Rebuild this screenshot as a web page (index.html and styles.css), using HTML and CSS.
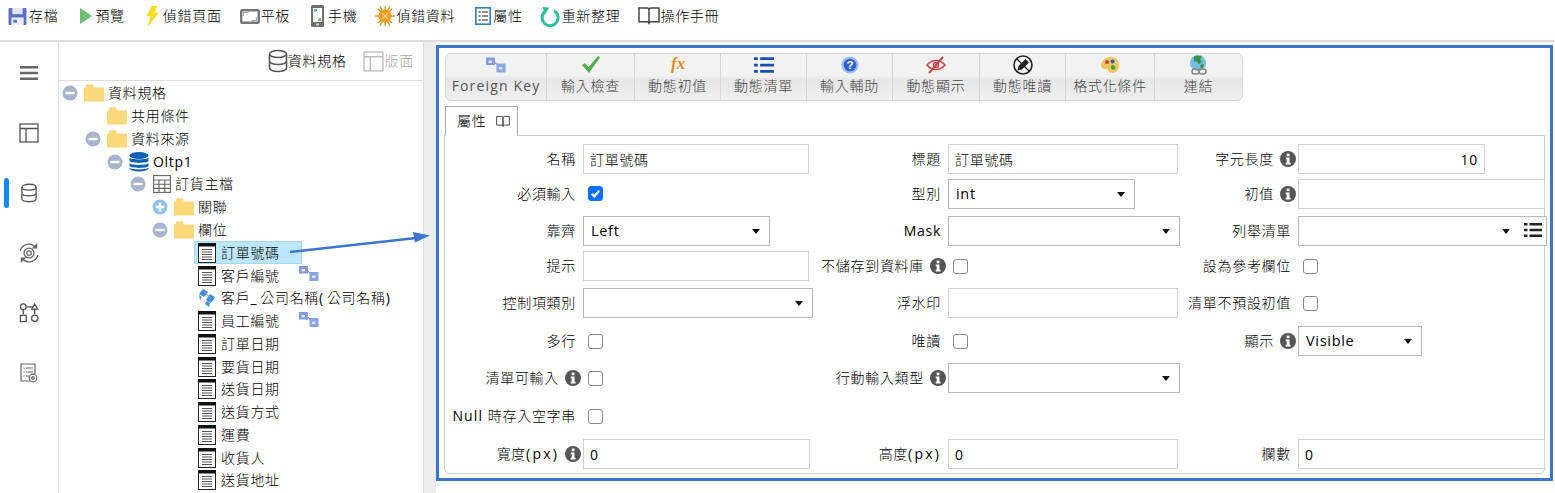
FILE: index.html
```html
<!DOCTYPE html>
<html lang="zh-Hant">
<head>
<meta charset="utf-8">
<title>資料規格</title>
<link rel="stylesheet" href="styles.css">
</head>
<body>
<svg class="defs" width="0" height="0" aria-hidden="true">
  <symbol id="i-db" viewBox="0 0 20 24"><g fill="none" stroke="currentColor" stroke-width="1.6"><ellipse cx="10" cy="5" rx="8.5" ry="3.5"/><path d="M1.5 5v14c0 2 3.8 3.5 8.5 3.500s8.500-1.500 8.500-3.500V5M1.500 12c0 2 3.800 3.500 8.500 3.500s8.500-1.500 8.500-3.500"/></g></symbol>
  <symbol id="i-layout" viewBox="0 0 20 20"><g fill="none" stroke="currentColor" stroke-width="1.300"><rect x="1" y="1" width="18" height="18"/><path d="M1 5.500h18M7 5.500V19"/></g></symbol>
  <symbol id="i-folder" viewBox="0 0 20 18"><path fill="#fbd87a" d="M0 3.500h2V1.500C2 .8 2.700.3 3.400.3h4.500c.8 0 1.300.5 1.500 1.200l.3 2H20V17.500H0z"/></symbol>
  <symbol id="i-minus" viewBox="0 0 16 16"><circle cx="8" cy="8" r="7.500" fill="#a7b4cb"/><rect x="3.500" y="6.800" width="9" height="2.400" fill="#fff"/></symbol>
  <symbol id="i-plus" viewBox="0 0 16 16"><circle cx="8" cy="8" r="7.500" fill="#8fc1fa"/><path fill="#fff" d="M3.500 6.800h3.300V3.500h2.400v3.300h3.300v2.400H9.200v3.300H6.800V9.200H3.500z"/></symbol>
  <symbol id="i-field" viewBox="0 0 18 20"><rect x=".5" y=".5" width="17" height="19" fill="#fff" stroke="#222"/><rect x="0" y="0" width="18" height="3.500" fill="#111"/><path stroke="#555" stroke-width="1.200" d="M4 6.500h10M4 9h10M4 11.500h10M4 14h10M4 16.500h10"/></symbol>
  <symbol id="i-fk" viewBox="0 0 20 15"><path d="M8 4.500l5 4" stroke="#777" fill="none"/><rect x="0" y="0" width="9" height="7.500" fill="#7f9ce0"/><rect x="2.500" y="3" width="3.500" height="2.500" fill="#dfe3ea"/><rect x="10.500" y="6" width="9" height="9" fill="#8aa5e3"/><rect x="13" y="9.500" width="3.500" height="2.500" fill="#dfe3ea"/></symbol>
  <symbol id="i-info" viewBox="0 0 16 16"><circle cx="8" cy="8" r="8" fill="#555"/><rect x="6.700" y="2.600" width="2.800" height="2.600" fill="#fff"/><path fill="#fff" d="M5.700 6.600h3.800v5.200h1.100v1.700H5.600v-1.700h1.100V8.300h-1z"/></symbol>
  <symbol id="i-list" viewBox="0 0 18 16"><path fill="currentColor" d="M0 1h3.500v2.500H0zM0 6.800h3.500v2.500H0zM0 12.500h3.500V15H0zM5.500 1H18v2.500H5.500zM5.500 6.800H18v2.500H5.500zM5.500 12.500H18V15H5.500z"/></symbol>
  <symbol id="i-book" viewBox="0 0 22 20"><g fill="none" stroke="currentColor" stroke-width="1.500"><path d="M1 2h8c1 0 2 .6 2 1.600V17c0-.7-1-1.300-2-1.300H1zM21 2h-8c-1 0-2 .6-2 1.600V17c0-.7 1-1.300 2-1.300h8z"/></g><path fill="currentColor" d="M9.500 16h3l-1.500 3z"/></symbol>
</svg>

<header class="topbar">
  <a class="tool"><svg class="ico t-save" viewBox="0 0 19 18"><rect width="19" height="18" rx="1" fill="#5b6fc9"/><rect x="4" y="0" width="11" height="6.500" fill="#dfe4f6"/><rect x="3" y="10" width="13" height="8" fill="#e9ecf9"/><rect x="5" y="12.500" width="4" height="3" fill="#5b6fc9"/></svg>存檔</a>
  <a class="tool"><svg class="ico t-play" viewBox="0 0 14 16"><path fill="#6cbd73" d="M2 0l12 8-12 8z"/></svg>預覽</a>
  <a class="tool"><svg class="ico t-bolt" viewBox="0 0 14 20"><path fill="#f7df1e" stroke="#f0c800" stroke-width=".5" d="M7 0h5L9 7h4L3 20l3-10H2z"/></svg>偵錯頁面</a>
  <a class="tool"><svg class="ico t-tablet" viewBox="0 0 20 15"><rect x="1.200" y="1.200" width="17.600" height="12.600" rx="1" fill="#fff" stroke="#777" stroke-width="2.400"/><path fill="none" stroke="#aaa" stroke-width="1.200" d="M3.500 7V3.500h5M16.500 8v3.500h-5"/></svg>平板</a>
  <a class="tool"><svg class="ico t-phone" viewBox="0 0 14 22"><rect x="0" y="0" width="13" height="22" rx="1.500" fill="#707070"/><rect x="2" y="3" width="9" height="14" fill="#fff"/><path fill="#6fc07a" d="M3 4h3v2H5v1H3zM10 16H7v-2h1v-1h2z"/><rect x="5" y="18.500" width="3" height="2" fill="#ccc"/></svg>手機</a>
  <a class="tool"><svg class="ico t-bug" viewBox="0 0 20 20"><g stroke="#e8951b" stroke-width="1.300"><path d="M3 3l14 14M17 3L3 17M10 0v20M0 10h20M5 0l10 20M15 0L5 20"/></g><circle cx="10" cy="10" r="6.500" fill="#f09a1d"/><path stroke="#fbd27a" stroke-width="1.500" d="M7 7l6 6M13 7l-6 6"/></svg>偵錯資料</a>
  <a class="tool"><svg class="ico t-props" viewBox="0 0 16 18"><rect x=".8" y=".8" width="14.400" height="16.400" fill="#fff" stroke="#2f7fb3" stroke-width="1.600"/><path stroke="#666" stroke-width="1.300" d="M3.500 5h2M7 5h6M3.500 9h2M7 9h6M3.500 13h2M7 13h6"/></svg>屬性</a>
  <a class="tool"><svg class="ico t-refresh" viewBox="0 0 20 21"><path fill="none" stroke="#2dbf9f" stroke-width="3" d="M5 5.500a8 8 0 1 0 9-.800"/><path fill="#2dbf9f" d="M2.500 1l7 .5-4.500 7z"/></svg>重新整理</a>
  <a class="tool"><svg class="ico t-book"><use href="#i-book"/></svg>操作手冊</a>
</header>

<div class="workspace">
  <nav class="rail">
    <div class="rail-item"><svg class="rail-ico r-menu" viewBox="0 0 18 14"><path fill="#666" d="M0 0h18v2.500H0zM0 5.700h18v2.500H0zM0 11.400h18v2.500H0z"/></svg></div>
    <div class="rail-item"><svg class="rail-ico"><use href="#i-layout"/></svg></div>
    <div class="rail-item"><span class="rail-mark"></span><svg class="rail-ico"><use href="#i-db"/></svg></div>
    <div class="rail-item"><svg class="rail-ico r-sync" viewBox="0 0 20 20"><g fill="none" stroke="#666" stroke-width="1.200"><path d="M2 8a8 8 0 0 1 14-3M18 12a8 8 0 0 1-14 3"/><circle cx="10" cy="10" r="4.500"/><circle cx="10" cy="10" r="2"/></g><path fill="#666" d="M17.500 1v5h-5zM2.500 19v-5h5z"/></svg></div>
    <div class="rail-item"><svg class="rail-ico" viewBox="0 0 20 21"><g fill="none" stroke="#555" stroke-width="1.400"><circle cx="4" cy="4" r="3"/><path d="M16 1l3 5.500h-6zM7 4h7.500M4 7v5M16 7v5"/><rect x="1" y="13" width="6" height="6.500"/><circle cx="16" cy="16" r="3.300"/></g></svg></div>
    <div class="rail-item"><svg class="rail-ico" viewBox="0 0 18 20"><g fill="none" stroke="#666" stroke-width="1.200"><path d="M10 18H1V1h14v10"/><path d="M3.500 5h1M6 5h7M3.500 9h1M6 9h7M3.500 13h1M6 13h3"/><circle cx="13" cy="15" r="3.800" fill="#fff"/><circle cx="13" cy="15" r="1.300"/></g></svg></div>
  </nav>

  <section class="tree-panel">
    <div class="tree-head">
      <span class="head-tab"><svg class="head-ico c-dark"><use href="#i-db"/></svg>資料規格</span>
      <span class="head-tab is-off"><svg class="head-ico"><use href="#i-layout"/></svg>版面</span>
    </div>
    <ul class="tree">
      <li class="node l0"><svg class="tog"><use href="#i-minus"/></svg><svg class="folder"><use href="#i-folder"/></svg>資料規格</li>
      <li class="node l1"><span class="tog"></span><svg class="folder"><use href="#i-folder"/></svg>共用條件</li>
      <li class="node l1"><svg class="tog"><use href="#i-minus"/></svg><svg class="folder"><use href="#i-folder"/></svg>資料來源</li>
      <li class="node l2 lt"><svg class="tog"><use href="#i-minus"/></svg><svg class="dbi" viewBox="0 0 20 20"><g fill="#0f62b5"><ellipse cx="10" cy="3.500" rx="9.500" ry="3.500"/><path d="M.5 5.500C2 8 18 8 19.500 5.500V9C18 11.500 2 11.500.5 9zM.5 11C2 13.500 18 13.500 19.500 11v3C18 16.500 2 16.500.5 14zM.5 15.500C2 18 18 18 19.500 15.500v1C18 20.500 2 20.500.5 16.500z"/></g></svg>Oltp1</li>
      <li class="node l3"><svg class="tog"><use href="#i-minus"/></svg><svg class="tbl" viewBox="0 0 18 18"><g fill="none" stroke="#666" stroke-width="1.100"><rect x=".6" y=".6" width="16.800" height="16.800"/><path d="M.6 5h16.800M.6 9.200h16.800M.6 13.400h16.800M6 5v12.400M11.800 5v12.400"/></g></svg>訂貨主檔</li>
      <li class="node l4"><svg class="tog"><use href="#i-plus"/></svg><svg class="folder"><use href="#i-folder"/></svg>關聯</li>
      <li class="node l4"><svg class="tog"><use href="#i-minus"/></svg><svg class="folder"><use href="#i-folder"/></svg>欄位</li>
      <li class="node leaf is-sel"><svg class="fld"><use href="#i-field"/></svg>訂單號碼</li>
      <li class="node leaf"><svg class="fld"><use href="#i-field"/></svg>客戶編號<svg class="fk"><use href="#i-fk"/></svg></li>
      <li class="node leaf"><svg class="fld" viewBox="0 0 18 18"><path fill="#3f8fe0" d="M5 0l5 3-4 5-5-3zM12 5l5 3-4 6-5-3zM1 6l3 2-2 3zM9 12l3 2-1 4-4-3z"/><path stroke="#999" d="M6 3l7 6"/></svg><span>客戶<span class="wide">_</span>公司名稱<span class="wide">(</span>公司名稱<span class="wide">)</span></span></li>
      <li class="node leaf"><svg class="fld"><use href="#i-field"/></svg>員工編號<svg class="fk"><use href="#i-fk"/></svg></li>
      <li class="node leaf"><svg class="fld"><use href="#i-field"/></svg>訂單日期</li>
      <li class="node leaf"><svg class="fld"><use href="#i-field"/></svg>要貨日期</li>
      <li class="node leaf"><svg class="fld"><use href="#i-field"/></svg>送貨日期</li>
      <li class="node leaf"><svg class="fld"><use href="#i-field"/></svg>送貨方式</li>
      <li class="node leaf"><svg class="fld"><use href="#i-field"/></svg>運費</li>
      <li class="node leaf"><svg class="fld"><use href="#i-field"/></svg>收貨人</li>
      <li class="node leaf"><svg class="fld"><use href="#i-field"/></svg>送貨地址</li>
    </ul>
  </section>

  <div class="splitter"></div>

  <main class="frame">
    <div class="ribbon">
      <a class="rb w-fk lt"><svg class="rb-ico"><use href="#i-fk"/></svg>Foreign Key</a>
      <a class="rb w-88"><svg class="rb-ico" viewBox="0 0 20 18"><path fill="#53ad4e" d="M1 9l3-2 3.500 4L17 0l2 1.500L8 17z"/></svg>輸入檢查</a>
      <a class="rb"><svg class="rb-ico" viewBox="0 0 20 18"><text x="3" y="13" class="fx">fx</text></svg>動態初值</a>
      <a class="rb"><svg class="rb-ico c-blue"><use href="#i-list"/></svg>動態清單</a>
      <a class="rb"><svg class="rb-ico" viewBox="0 0 20 20"><circle cx="10" cy="10" r="9.500" fill="#9dbdf2"/><circle cx="10" cy="10" r="7" fill="#2f63cf"/><text x="10" y="14.500" class="qm">?</text></svg>輸入輔助</a>
      <a class="rb w-87"><svg class="rb-ico" viewBox="0 0 20 18"><g fill="none" stroke="#c9484a" stroke-width="1.500"><path d="M1 9c5-6 13-6 18 0-5 6-13 6-18 0z"/><circle cx="10" cy="9" r="2.500"/><path stroke-width="2" d="M17 1L3 17"/></g></svg>動態顯示</a>
      <a class="rb"><svg class="rb-ico big" viewBox="0 0 20 20"><circle cx="10" cy="10" r="9" fill="#f4f4f4" stroke="#222" stroke-width="1.600"/><path stroke="#222" stroke-width="1.200" d="M3.500 3.500l13 13"/><path fill="#222" d="M12.500 4l3.500 3.500-7 7-4.500 1 1-4.500z"/></svg>動態唯讀</a>
      <a class="rb w-89"><svg class="rb-ico" viewBox="0 0 20 18"><path fill="#f2c85e" d="M9 1c6-1 10 3 10 8s-3 8-7 8-3-4-6-4-5-1-5-4 3-7 8-8z"/><circle cx="7" cy="6" r="2" fill="#d43c3c"/><circle cx="12.500" cy="5.500" r="2" fill="#2f55c8"/><circle cx="13" cy="11.500" r="2.200" fill="#3ea03e"/></svg>格式化條件</a>
      <a class="rb w-last"><svg class="rb-ico big" viewBox="0 0 20 20"><circle cx="9" cy="8" r="8" fill="#72c0e4"/><path fill="#3f8f4c" d="M5 1.500c3-1 6-1 8 0l-2 3 2 2-3 3-2-3H5zM11 10l4-1-1 4-2 1z"/><rect x="3" y="14" width="7" height="5" rx="2.500" fill="none" stroke="#888" stroke-width="1.500"/><rect x="10" y="14" width="7" height="5" rx="2.500" fill="none" stroke="#888" stroke-width="1.500"/></svg>連結</a>
    </div>
    <div class="tabs"><span class="tab">屬性<svg class="tab-ico"><use href="#i-book"/></svg></span></div>
    <form class="props">
      <label class="lb">名稱</label><div class="fd"><input class="in w226" value="訂單號碼"></div>
      <label class="lb">標題</label><div class="fd"><input class="in w230" value="訂單號碼"></div>
      <label class="lb has-i">字元長度<svg class="info"><use href="#i-info"/></svg></label><div class="fd"><input class="in w187 num lt" value="10"></div>

      <label class="lb">必須輸入</label><div class="fd"><span class="cb on"><svg viewBox="0 0 14 14"><path fill="none" stroke="#fff" stroke-width="2.400" d="M3 7.200l2.800 2.800L11 4"/></svg></span></div>
      <label class="lb">型別</label><div class="fd"><div class="sel w187">int</div></div>
      <label class="lb has-i">初值<svg class="info"><use href="#i-info"/></svg></label><div class="fd"><input class="in w247"></div>

      <label class="lb">靠齊</label><div class="fd"><div class="sel w187">Left</div></div>
      <label class="lb lt">Mask</label><div class="fd"><div class="sel w232"></div></div>
      <label class="lb">列舉清單</label><div class="fd"><div class="sel w249 with-list"><svg class="sel-list"><use href="#i-list"/></svg></div></div>

      <label class="lb">提示</label><div class="fd"><input class="in w226"></div>
      <label class="lb has-i">不儲存到資料庫<svg class="info"><use href="#i-info"/></svg></label><div class="fd"><span class="cb"></span></div>
      <label class="lb">設為參考欄位</label><div class="fd"><span class="cb"></span></div>

      <label class="lb">控制項類別</label><div class="fd"><div class="sel w230"></div></div>
      <label class="lb">浮水印</label><div class="fd"><input class="in w230"></div>
      <label class="lb">清單不預設初值</label><div class="fd"><span class="cb"></span></div>

      <label class="lb">多行</label><div class="fd"><span class="cb"></span></div>
      <label class="lb">唯讀</label><div class="fd"><span class="cb"></span></div>
      <label class="lb has-i">顯示<svg class="info"><use href="#i-info"/></svg></label><div class="fd"><div class="sel w124">Visible</div></div>

      <label class="lb has-i">清單可輸入<svg class="info"><use href="#i-info"/></svg></label><div class="fd"><span class="cb"></span></div>
      <label class="lb has-i">行動輸入類型<svg class="info"><use href="#i-info"/></svg></label><div class="fd"><div class="sel w232"></div></div>
      <span></span><span></span>

      <label class="lb"><span class="lt null">Null&nbsp;</span>時存入空字串</label><div class="fd"><span class="cb"></span></div>
      <span></span><span></span><span></span><span></span>

      <label class="lb has-i">寬度<span class="lt px">(px)</span><svg class="info"><use href="#i-info"/></svg></label><div class="fd"><input class="in w227 lt" value="0"></div>
      <label class="lb">高度<span class="lt px">(px)</span></label><div class="fd"><input class="in w230 lt" value="0"></div>
      <label class="lb">欄數</label><div class="fd"><input class="in w247 lt" value="0"></div>
    </form>
  </main>

  <svg class="arrow" viewBox="0 0 145 25" width="145" height="25"><path d="M0 20L126 6" stroke="#3a75d0" stroke-width="2.400" fill="none"/><path d="M123 0l17 3.500-15 7z" fill="#3a75d0"/></svg>
</div>
</body>
</html>
```
FILE: styles.css
```css
* { box-sizing: border-box; }
html, body { margin: 0; height: 100%; overflow: hidden; }
body {
  display: flex;
  flex-direction: column;
  background: #fff;
  color: #000;
  font: 300 14px/20px "Open Sans", "Noto Sans CJK TC", sans-serif;
  letter-spacing: .7px;
}
.defs { position: absolute; }
.lt { font-weight: 400; }
.wide { letter-spacing: 3.700px; font-weight: 400; }
.px { letter-spacing: 2.200px; }
.null { letter-spacing: 1.100px; }

.topbar {
  flex: 0 0 42px;
  display: flex;
  align-items: flex-start;
  gap: 20px;
  padding: 6px 0 0 8px;
  border-bottom: 2px solid #dcdcdc;
}
.tool { display: flex; align-items: center; height: 20px; white-space: nowrap; }
.ico { flex: none; }
.t-save { width: 19px; height: 17px; margin-right: 2px; }
.t-play { width: 14px; height: 16px; margin-right: 3px; }
.t-bolt { width: 14px; height: 20px; margin-right: 4px; }
.t-tablet { width: 20px; height: 15px; margin: 0 1px 0 -2px; }
.t-phone { width: 14px; height: 22px; margin: 0 3px 0 1px; }
.t-bug { width: 20px; height: 20px; margin: 0 1px 0 -2px; }
.t-props { width: 16px; height: 18px; margin-right: 2px; }
.t-refresh { width: 20px; height: 21px; margin: 0 2px 0 -3px; }
.t-book { width: 22px; height: 20px; margin-left: -2px; color: #444; }

.workspace { flex: 1; display: flex; position: relative; min-height: 0; }

.rail {
  flex: 0 0 59px;
  border-right: 1px solid #ddd;
  padding-top: 1px;
  color: #555;
}
.rail-item {
  position: relative;
  height: 60px;
  display: flex;
  align-items: center;
  justify-content: center;
}
.rail-ico { width: 20px; height: 20px; display: block; flex: none; }
.r-menu { width: 18px; height: 14px; }
.r-sync { width: 22px; height: 22px; }
.rail-mark {
  position: absolute; left: 4px; top: 15px;
  width: 5px; height: 30px; border-radius: 3px; background: #0d8bf2;
}

.tree-panel { flex: 0 0 364px; min-width: 0; overflow: hidden; }
.tree-head {
  height: 39px;
  display: flex;
  justify-content: flex-end;
  align-items: center;
  gap: 16px;
  padding: 0 9px 0 0;
  border-bottom: 1px solid #ddd;
}
.head-tab { display: flex; align-items: center; }
.head-tab.is-off { color: #aaa; }
.head-ico { width: 21px; height: 21px; color: #bbb; margin-right: 1px; }
.head-ico.c-dark { color: #555; height: 24px; width: 20px; margin-right: 0; }

.tree { list-style: none; margin: 0; padding: 1px 0 0 3px; }
.node { display: flex; align-items: center; height: 22.78px; white-space: nowrap; }
.l1 { padding-left: 23px; }
.l2 { padding-left: 45px; }
.l3 { padding-left: 68px; }
.l4 { padding-left: 90px; }
.leaf { margin-left: 132px; padding-left: 4px; width: 108px; }
.tog { width: 16px; height: 16px; flex: none; margin-right: 6px; }
.folder { width: 20px; height: 18px; flex: none; margin-right: 4px; }
.dbi { width: 20px; height: 20px; flex: none; margin-right: 4px; }
.tbl { width: 18px; height: 18px; flex: none; margin: 0 4px 0 1px; }
.fld { width: 18px; height: 20px; flex: none; margin-right: 5px; }
.fk { width: 20px; height: 15px; margin: -4px 0 0 19px; flex: none; }
.is-sel { background: #bde6fb; outline: 1px solid #a5d8f5; outline-offset: -1px; }

.splitter { flex: 0 0 13px; background: #ededed; border-left: 1px solid #ddd; }

.frame {
  flex: 0 0 1117px;
  height: 436px;
  margin-top: 3px;
  border: 3px solid #3a75d0;
  padding: 5px 5px 4px 5px;
  display: flex;
  flex-direction: column;
}
.ribbon {
  flex: none;
  align-self: flex-start;
  display: flex;
  height: 48px;
  margin-left: 1px;
  border: 1px solid #d8d8d8;
  border-radius: 6px;
  background: linear-gradient(#f2f2f2 0 48%, #e6e6e6 55%, #f0f0f0 100%);
  color: #444;
}
.rb {
  display: flex;
  flex-direction: column;
  align-items: center;
  padding: 2px 0 0;
  width: 86px;
  border-right: 1px solid #d5d5d5;
  white-space: nowrap;
}
.rb.w-fk { width: 101px; letter-spacing: 1.150px; color: #555; }
.rb.w-88 { width: 88px; }
.rb.w-87 { width: 87px; }
.rb.w-89 { width: 89px; }
.rb.w-last { border-right: 0; width: 87px; }
.rb-ico { width: 20px; height: 18px; margin-bottom: 2px; flex: none; overflow: visible; }
.rb-ico.big { height: 20px; margin: -1px 0 1px; }
.c-blue { color: #1a4fb0; }
.fx { font: italic 700 17px "Liberation Serif", serif; fill: #e58a1f; letter-spacing: 0; }
.qm { font: 700 13px "Liberation Sans", sans-serif; fill: #fff; text-anchor: middle; letter-spacing: 0; }

.tabs { flex: none; display: flex; margin: 5px 0 -1px 1px; position: relative; }
.tab {
  display: flex;
  align-items: center;
  height: 30px;
  padding: 0 7px 0 11px;
  background: #fff;
  border: 1px solid #aaa;
  border-bottom-color: #fff;
}
.tab-ico { width: 14px; height: 13px; margin-left: 10px; color: #444; }

.props {
  flex: 1 1 0;
  min-height: 0;
  display: grid;
  grid-template-columns: 138px 237px 128px 222px 128px 1fr;
  grid-template-rows: 34px 35px 40px 30px 44px 32px 42px 34px 42px;
  align-items: center;
  padding: 6px 0 0;
  border: 1px solid #ccc;
  border-radius: 0 0 5px 5px;
}
.lb {
  display: flex;
  justify-content: flex-end;
  align-items: center;
  padding-right: 7px;
  white-space: nowrap;
}
.lb.has-i { padding-right: 2px; }
.info { width: 16px; height: 16px; margin-left: 6px; flex: none; }
.fd { display: flex; align-items: center; min-width: 0; }

.in, .sel {
  height: 30px;
  font-family: inherit;
  font-size: inherit;
  font-weight: 300;
  line-height: inherit;
  letter-spacing: inherit;
  color: #000;
  background: #fff;
  padding: 0 6px;
  border: 1px solid #d2d2d2;
  outline: 0;
  flex: none;
}
.in.lt { font-weight: 400; }
.num { text-align: right; }
.sel {
  position: relative;
  display: flex;
  align-items: center;
  padding-left: 7px;
  font-size: 14.5px;
  font-weight: 400;
  border: 1px solid #b8b8b8;
}
.sel::after {
  content: "";
  position: absolute;
  right: 9px; top: 12px;
  border: 4.500px solid transparent;
  border-top: 5px solid #111;
  border-bottom: 0;
}
.with-list::after { right: 36px; }
.sel-list { position: absolute; right: 4px; top: 5px; width: 18px; height: 16px; color: #222; }
.w124 { width: 124px; }
.w187 { width: 187px; }
.w226 { width: 226px; }
.w227 { width: 227px; }
.w230 { width: 230px; }
.w232 { width: 232px; }
.w247 { width: 247px; }
.w249 { width: 249px; }

.cb {
  width: 15px; height: 15px;
  margin-left: 5px;
  border: 1.500px solid #8a8a8a;
  border-radius: 3px;
  background: #fff;
  display: block;
  flex: none;
}
.cb.on { background: #0d6efd; border-color: #0d6efd; }
.cb svg { display: block; width: 100%; height: 100%; }

.arrow { position: absolute; left: 290px; top: 190px; pointer-events: none; }
```
